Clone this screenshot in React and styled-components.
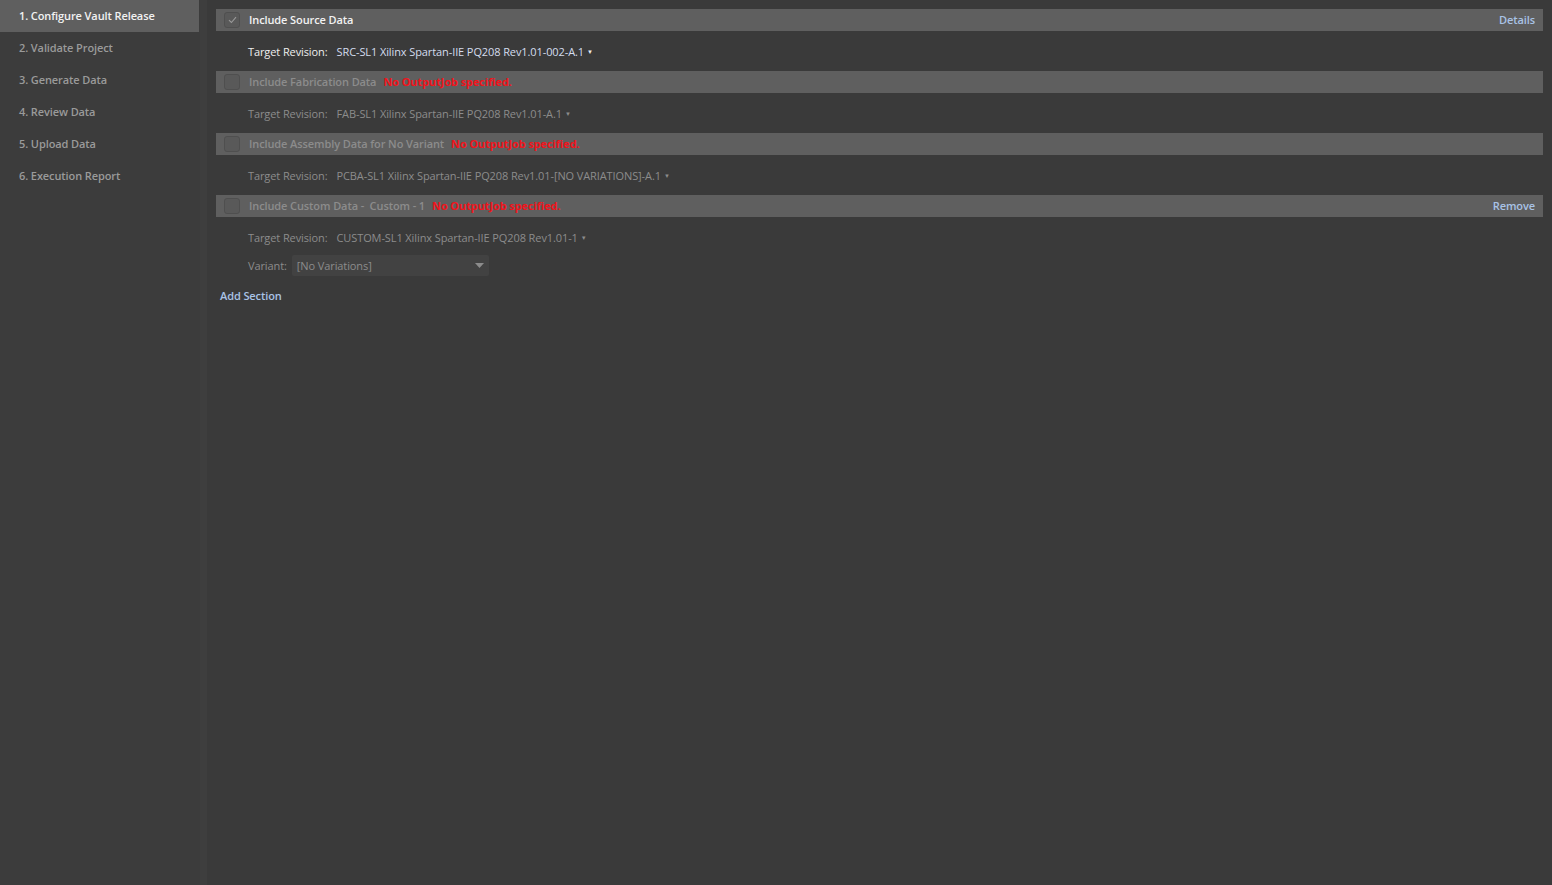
import styled, { createGlobalStyle } from "styled-components";

const Global = createGlobalStyle`
  html, body, #root {
    margin: 0;
    height: 100%;
  }
  body {
    background: #3a3a3a;
    font-family: "Open Sans", "Noto Sans", sans-serif;
    font-size: 11px;
    letter-spacing: -0.1px;
    color: #d8d8d8;
    overflow: hidden;
  }
`;

const Shell = styled.div`
  display: flex;
  height: 885px;
`;

const Sidebar = styled.nav`
  width: 200px;
  flex-shrink: 0;
  background: #3c3c3c;
  display: flex;
  flex-direction: column;
`;

const Step = styled.div`
  height: 32px;
  box-sizing: border-box;
  padding-bottom: 2px;
  display: flex;
  align-items: center;
  padding-left: 19px;
  font-weight: 600;
  color: ${(p) => (p.active ? "#f2f2f2" : "#9a9a9a")};
  background: ${(p) => (p.active ? "#5f5f5f" : "transparent")};
  width: ${(p) => (p.active ? "199px" : "auto")};
`;

const Splitter = styled.div`
  width: 7px;
  flex-shrink: 0;
  background: #3e3e3e;
`;

const Main = styled.main`
  flex: 1;
  padding: 9px 9px 0 9px;
  display: flex;
  flex-direction: column;
`;

const Header = styled.div`
  height: 22px;
  box-sizing: border-box;
  padding: 0 8px 1px 8px;
  background: #5f5f5f;
  display: flex;
  align-items: center;
  gap: 9px;
`;

const Check = styled.span`
  width: 14px;
  height: 14px;
  margin-top: 1px;
  border-radius: 3px;
  background: #595959;
  border: 1px solid #4f4f4f;
  display: inline-flex;
  align-items: center;
  justify-content: center;
  flex-shrink: 0;
`;

const Title = styled.span`
  font-weight: 600;
  white-space: pre;
  color: ${(p) => (p.disabled ? "#8c8c8c" : "#f2f2f2")};
`;

const Error = styled.span`
  font-weight: 700;
  color: #f0141c;
  margin-left: -2px;
`;

const Link = styled.a`
  font-weight: 600;
  color: #a9c3e6;
  text-decoration: none;
  margin-left: ${(p) => (p.right ? "auto" : "0")};
  cursor: pointer;
`;

const Body = styled.div`
  padding: 10px 0 8px 32px;
  display: flex;
  flex-direction: column;
  gap: 6px;
`;

const Row = styled.div`
  height: 22px;
  box-sizing: border-box;
  padding-bottom: 1px;
  display: flex;
  align-items: center;
  color: ${(p) => (p.disabled ? "#8c8c8c" : "#eeeeee")};
`;

const Label = styled.span`
  margin-right: 9px;
`;

const Value = styled.span`
  color: ${(p) => (p.disabled ? "#8c8c8c" : "#d4ddee")};
`;

const Caret = styled.span`
  font-size: 6px;
  margin-left: 3px;
  color: inherit;
`;

const Select = styled.div`
  width: 187px;
  height: 21px;
  margin-left: -4px;
  background: #424242;
  border-radius: 2px;
  display: flex;
  align-items: center;
  justify-content: space-between;
  padding: 0 5px;
  color: #8c8c8c;
`;

const AddRow = styled.div`
  height: 20px;
  display: flex;
  align-items: center;
  padding-left: 4px;
  padding-bottom: 1px;
`;

const steps = [
  "1. Configure Vault Release",
  "2. Validate Project",
  "3. Generate Data",
  "4. Review Data",
  "5. Upload Data",
  "6. Execution Report",
];

const CheckMark = () => (
  <svg width="9" height="8" viewBox="0 0 9 8">
    <path d="M1 4.2 L3.4 6.5 L8 1.2" fill="none" stroke="#9a9a9a" strokeWidth="1.1" />
  </svg>
);

function Section({ title, checked, error, link, revision, children }) {
  return (
    <>
      <Header>
        <Check>{checked && <CheckMark />}</Check>
        <Title disabled={!checked}>{title}</Title>
        {error && <Error>No OutputJob specified.</Error>}
        {link && <Link right>{link}</Link>}
      </Header>
      <Body>
        <Row disabled={!checked}>
          <Label>Target Revision:</Label>
          <Value disabled={!checked}>{revision}</Value>
          <Caret>▼</Caret>
        </Row>
        {children}
      </Body>
    </>
  );
}

export default function App() {
  return (
    <Shell>
      <Global />
      <Sidebar>
        {steps.map((s, i) => (
          <Step key={s} active={i === 0}>
            {s}
          </Step>
        ))}
      </Sidebar>
      <Splitter />
      <Main>
        <Section
          title="Include Source Data"
          checked
          link="Details"
          revision="SRC-SL1 Xilinx Spartan-IIE PQ208 Rev1.01-002-A.1"
        />
        <Section
          title="Include Fabrication Data"
          error
          revision="FAB-SL1 Xilinx Spartan-IIE PQ208 Rev1.01-A.1"
        />
        <Section
          title="Include Assembly Data for No Variant"
          error
          revision="PCBA-SL1 Xilinx Spartan-IIE PQ208 Rev1.01-[NO VARIATIONS]-A.1"
        />
        <Section
          title="Include Custom Data -  Custom - 1"
          error
          link="Remove"
          revision="CUSTOM-SL1 Xilinx Spartan-IIE PQ208 Rev1.01-1"
        >
          <Row disabled>
            <Label>Variant:</Label>
            <Select>
              <span>[No Variations]</span>
              <svg width="9" height="5" viewBox="0 0 9 5">
                <path d="M0 0 H9 L4.5 5 Z" fill="#8c8c8c" />
              </svg>
            </Select>
          </Row>
        </Section>
        <AddRow>
          <Link>Add Section</Link>
        </AddRow>
      </Main>
    </Shell>
  );
}
